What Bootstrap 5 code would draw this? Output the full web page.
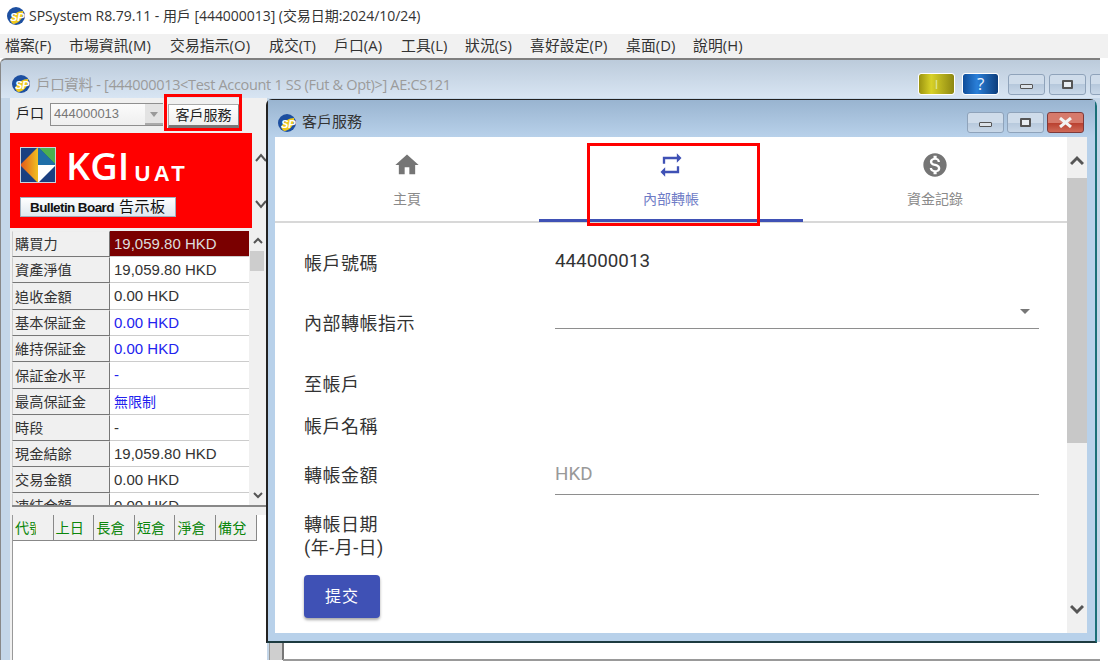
<!DOCTYPE html>
<html lang="zh-Hant">
<head>
<meta charset="utf-8">
<title>SPSystem</title>
<link href="https://cdn.jsdelivr.net/npm/bootstrap@5.3.0/dist/css/bootstrap.min.css" rel="stylesheet">
<style>
html,body{margin:0;height:672px;overflow:hidden;background:#fff}
body{font-family:"Liberation Sans","Noto Sans CJK TC",sans-serif;font-size:14px;color:#222;width:1108px;position:relative}
.top-title{height:34px;padding:0 0 3px 7px;gap:4px;font-size:14px;color:#333;font-family:"Open Sans","Noto Sans CJK TC",sans-serif;letter-spacing:-.04px}
.menu-strip{height:24px;background:#f1f1f1;color:#333;font-size:14.8px;letter-spacing:.1px;font-family:"Open Sans","Noto Sans CJK TC",sans-serif}
.menu-strip span{position:absolute;top:36px;line-height:18px}
.desk-window{position:absolute;left:0;top:58px;width:1100px;height:602px;background:#c4d6e8;border-top:2px solid #7f7f7f;border-left:1px solid #888;border-top-left-radius:6px;overflow:hidden}
.desk-head{height:38px;background:linear-gradient(#bccbdb,#d8e5f3);padding-left:11px;gap:6px;color:#9b9b9b;font-size:14.5px;padding-top:14px;align-items:flex-start!important;font-family:"Open Sans","Noto Sans CJK TC",sans-serif;letter-spacing:-.32px;position:relative}
.desk-head svg{margin-top:1px}
.side-panel{position:absolute;left:9px;top:38px;width:257px;height:562px;background:#f0f0f0}
.account-row{height:35px;padding:5px 0 0 6px;gap:6px;font-size:14px;line-height:21px}
.account-box{width:113px;height:23px;border:1px solid #8f8f8f;border-right:0;background:linear-gradient(#fbfbfb,#efefef);color:#777;padding-left:3px;line-height:20px;font-size:13px;position:relative}
.account-box i{position:absolute;right:0;top:0;bottom:0;width:18px;background:#e3e3e3;border-bottom:2px solid #aaa}
.account-box i::after{content:"";position:absolute;left:5px;top:8px;border:4px solid transparent;border-top:5px solid #999;border-bottom:0}
.account-action{margin:1px 0 0 -1px;width:72px;height:24px;background:linear-gradient(#fff,#eee);border:1px solid #aaa;border-bottom:3px solid #777;border-right:2px solid #888;font-size:14px;line-height:19px;text-align:center;color:#222;padding:0}
.banner-row{height:98px}
.kgi-banner{width:242px;height:95px;background:#f00;position:relative;color:#fff;padding:14px 0 0 10px}
.kgi-word{font-family:"Open Sans","Liberation Sans",sans-serif;font-weight:600;font-size:38px;line-height:36px;margin-left:10px}
.kgi-uat{font-family:"Liberation Sans",sans-serif;font-weight:700;font-size:22px;line-height:20px;letter-spacing:3.4px;margin:17px 0 0 5px}
.board-btn{width:156px;height:20px;margin-top:13px;padding-left:9px;background:linear-gradient(#fff,#dfe8ef);border:1px solid #9fb0bf;color:#111;font-size:13.5px;font-weight:700;line-height:18px;letter-spacing:-.6px;white-space:nowrap}
.board-btn em{font-style:normal;font-weight:400;font-size:15px;letter-spacing:.5px;margin-left:2px}
.side-chevrons{width:14px;height:95px;padding:19px 0 0 3px}
.info-wrap{height:276px;margin-left:2px;position:relative;overflow:hidden;border-bottom:2px solid #888}
.info-table{width:237px;border-collapse:separate;border-spacing:0;table-layout:fixed}
.info-table th{width:98px;height:26px;padding:0 0 0 2px;background:#f0f0f0;font-weight:400;font-size:14.2px;border-right:1px solid #777;border-bottom:1px solid #777;border-left:1px solid #ccc;border-top:1px solid #eee;color:#333;line-height:24px}
.info-table td{height:26px;padding:0 0 0 4px;background:#fff;font-size:15px;color:#333;border-bottom:1px solid #ccc;line-height:24px;white-space:nowrap}
.info-table tr.tall th,.info-table tr.tall td{height:27px}
.info-table td.hot{background:#7a0000;color:#ddd}
.info-table td.blu{color:#2222ee}
.info-table td.blu-sm{color:#2222ee;font-size:14px}
.side-scroll{width:15px;background:#f0f0f0;margin-left:1px;position:relative;height:274px}
.side-thumb{position:absolute;left:0;right:1px;top:20px;height:20px;background:#cdcdcd}
.chev-up,.chev-down{position:absolute;left:3px}
.chev-up{top:6px}.chev-down{bottom:6px}
.pos-area{height:calc(100% - 417px);margin:8px 0 0 2px;background:#fff;border-left:1px solid #999}
.pos-cells{height:26px}
.pos-cell{width:40.6px;background:#f0f0f0;color:#0b860b;font-size:14.2px;border-right:1px solid #888;border-bottom:1px solid #888;padding:3px 0 0 2px;line-height:20px;overflow:hidden;white-space:nowrap}
.pos-cell span{display:block;width:21px;overflow:hidden}
.win-btn-row{position:absolute;gap:4px}
.win-b{width:37px;height:21px;background:linear-gradient(#cfdcea 0 50%,#b6c8dc 50%,#c9d8e8);border:1px solid #8fa3ba;border-radius:3px;padding:0;display:flex;align-items:center;justify-content:center}
.win-b i{display:block}
.glyph-min{width:13px;height:5px;background:#dde3e9;border:1px solid #555;border-radius:1px;margin-top:4px}
.glyph-max{width:11px;height:9px;border:2px solid #555;background:#e9eef3;border-radius:1px}
.flag{position:absolute;top:14px;height:20px;width:35px;border-radius:2px;color:#dfe7a0;text-align:center;line-height:20px;font-size:13px;outline:1px solid #fff}
.flag-y{left:918px;background:linear-gradient(90deg,#9b9310,#d8d228 35%,#8d8711)}
.flag-b{left:962px;background:linear-gradient(90deg,#0e4d9a,#2a7fd8 40%,#0c3d7c);color:#eaf2ff;font-size:17px}
.back-col{position:absolute;left:269px;top:640px;width:14px;height:20px;background:#cfcfcf;border-left:1px solid #999;border-right:1px solid #777;z-index:0}
.back-line{position:absolute;left:283px;top:659px;width:817px;height:2px;background:#999}
.back-white{position:absolute;left:283px;top:642px;width:817px;height:17px;background:#fff;border-left:1px solid #777}
.svc-dialog{position:absolute;left:266px;top:99px;width:831px;height:544px;background:#b8d1ea;border:1px solid #222;border-left:2px solid #222;border-right:2px solid #1a6f78;border-bottom:2px solid #1d3b40;border-top-left-radius:6px;border-top-right-radius:7px;padding:0 8px 8px 7px;display:flex;flex-direction:column;z-index:2}
.svc-head{height:37px;margin:0 -8px 0 -7px;padding:8px 8px 0 10px;background:linear-gradient(#99b4d0,#b8d1ea);gap:6px;font-size:15px;color:#333;position:relative;flex:none}
.svc-head .win-btn-row{right:11px;top:12px;gap:3px}
.win-x{background:linear-gradient(#d67a6b 0 50%,#b83d2c 50%,#cf6a58);border-color:#7f3a3a}
.svc-body{flex:1;min-height:0;background:#fff;display:flex}
.svc-main{width:792px;display:flex;flex-direction:column;font-family:Roboto,"Noto Sans CJK TC",sans-serif}
.tab-row{height:86px;border-bottom:2px solid #d8d8d8;flex:none}
.tab-item{width:264px;height:85px;display:flex;flex-direction:column;align-items:center;color:#8a8a8a;font-size:14px;padding-top:14px;margin-bottom:-1px;text-decoration:none;letter-spacing:.05px}
.tab-item svg{margin-bottom:10px}
.tab-on{color:#6f7cc6;border-bottom:3px solid #3f51b5}
.form-area{padding:0 28px 0 29px;color:#333;font-size:18px;flex:1;position:relative}
.field{display:flex;align-items:center}
.field-lbl{width:251px;line-height:23px;letter-spacing:.5px}
.field-val{flex:1;font-size:18.8px;color:#333;margin-top:-4px}
.field-line{flex:1;height:40px;border-bottom:1px solid #8e8e8e;position:relative;color:#999;line-height:38px;font-size:18.8px}
.field-line b{position:absolute;right:9px;top:10px;border:5px solid transparent;border-top:5px solid #777;border-bottom:0}
.f1{margin-top:28px}
.f2{margin-top:27px;height:42px}
.f2 .field-line{height:30px;margin-bottom:18px}
.f3{margin-top:29px}
.f4{margin-top:19px}
.f5{margin-top:17px;height:40px}
.f6{margin-top:18px;line-height:23px}
.send-btn{display:block;margin:16px 0 0;width:76px;height:43px;background:#3f51b5;border:0;border-radius:4px;color:#fff;font-size:16px;box-shadow:0 2px 3px rgba(0,0,0,.35);font-family:inherit;padding:0;letter-spacing:1px}
.svc-scroll{width:20px;background:#f0f0f0;position:relative}
.svc-thumb{position:absolute;left:0;right:0;top:41px;height:265px;background:#c8c8c8}
.svc-scroll svg{position:absolute;left:3px}
.red-frame{position:absolute;border:3px solid #f00;z-index:5;pointer-events:none}
.rf1{left:164px;top:94px;width:78px;height:37px}
.rf2{left:587px;top:143px;width:173px;height:83px}
</style>
</head>
<body>
<div class="top-title d-flex align-items-center">
  <svg width="18" height="18" viewBox="0 0 18 18"><circle cx="9" cy="9" r="9" fill="#1d4fa0"/><path d="M3 13C6 7 11 4 16 4 17 9 13 16 7 17 5 17 4 15 3 13Z" fill="#f0c91d"/><text x="3" y="13.5" font-family="Liberation Sans" font-size="11" font-weight="700" font-style="italic" fill="#fff">SP</text></svg>
  <span>SPSystem R8.79.11 - 用戶 [444000013] (交易日期:2024/10/24)</span>
</div>
<div class="menu-strip">
  <span style="left:5px">檔案(F)</span><span style="left:69px">市場資訊(M)</span><span style="left:170px">交易指示(O)</span><span style="left:269px">成交(T)</span><span style="left:334px">戶口(A)</span><span style="left:401px">工具(L)</span><span style="left:465px">狀況(S)</span><span style="left:530px">喜好設定(P)</span><span style="left:626px">桌面(D)</span><span style="left:693px">說明(H)</span>
</div>

<div class="desk-window">
  <div class="desk-head d-flex">
    <svg width="18" height="18" viewBox="0 0 18 18"><circle cx="9" cy="9" r="9" fill="#1d4fa0"/><path d="M3 13C6 7 11 4 16 4 17 9 13 16 7 17 5 17 4 15 3 13Z" fill="#f0c91d"/><text x="3" y="13.5" font-family="Liberation Sans" font-size="11" font-weight="700" font-style="italic" fill="#fff">SP</text></svg>
    <span>戶口資料 - [444000013&lt;Test Account 1 SS (Fut &amp; Opt)&gt;] AE:CS121</span>
    <div class="flag flag-y">I</div>
    <div class="flag flag-b">?</div>
    <div class="win-btn-row d-flex" style="left:1007px;top:14px">
      <button class="win-b"><i class="glyph-min"></i></button>
      <button class="win-b"><i class="glyph-max"></i></button>
      <button class="win-b"></button>
    </div>
  </div>
  <div class="side-panel">
    <div class="account-row d-flex align-items-start">
      <span>戶口</span>
      <div class="account-box">444000013<i></i></div>
      <button class="account-action">客戶服務</button>
    </div>
    <div class="banner-row d-flex">
      <div class="kgi-banner">
        <div class="d-flex">
          <svg width="36" height="36" viewBox="0 0 36 36"><defs><linearGradient id="kg" x1="0" y1="0" x2="1" y2="0"><stop offset="0" stop-color="#e2541a"/><stop offset="1" stop-color="#f0c020"/></linearGradient></defs><rect width="36" height="36" fill="#1b3f80"/><polygon points="18,0 36,0 36,18" fill="#4caf50"/><polygon points="0,18 18,0 18,36" fill="url(#kg)"/><polygon points="18,18 36,18 18,36" fill="#fff"/><polygon points="18,0 36,18 18,18" fill="#1f6fa8"/><rect x=".5" y=".5" width="35" height="35" fill="none" stroke="#c9d3de"/></svg>
          <div class="kgi-word">KGI</div>
          <div class="kgi-uat">UAT</div>
        </div>
        <div class="board-btn">Bulletin Board <em>告示板</em></div>
      </div>
      <div class="side-chevrons">
        <svg width="12" height="60" viewBox="0 0 12 60"><path d="M1 9 6 3l5 6M1 49l5 6 5-6" fill="none" stroke="#555" stroke-width="2"/></svg>
      </div>
    </div>
    <div class="info-wrap d-flex">
      <table class="info-table">
        <tbody>
        <tr><th>購買力</th><td class="hot">19,059.80 HKD</td></tr>
        <tr><th>資產淨值</th><td>19,059.80 HKD</td></tr>
        <tr class="tall"><th>追收金額</th><td>0.00 HKD</td></tr>
        <tr><th>基本保証金</th><td class="blu">0.00 HKD</td></tr>
        <tr><th>維持保証金</th><td class="blu">0.00 HKD</td></tr>
        <tr class="tall"><th>保証金水平</th><td class="blu">-</td></tr>
        <tr><th>最高保証金</th><td class="blu-sm">無限制</td></tr>
        <tr><th>時段</th><td>-</td></tr>
        <tr><th>現金結餘</th><td>19,059.80 HKD</td></tr>
        <tr><th>交易金額</th><td>0.00 HKD</td></tr>
        <tr><th>凍結金額</th><td>0.00 HKD</td></tr>
        </tbody>
      </table>
      <div class="side-scroll">
        <svg class="chev-up" width="10" height="8" viewBox="0 0 10 8"><path d="M1 6 5 2l4 4" fill="none" stroke="#555" stroke-width="2"/></svg>
        <div class="side-thumb"></div>
        <svg class="chev-down" width="10" height="8" viewBox="0 0 10 8"><path d="M1 2l4 4 4-4" fill="none" stroke="#555" stroke-width="2"/></svg>
      </div>
    </div>
    <div class="pos-area">
      <div class="pos-cells d-flex">
        <div class="pos-cell"><span>代號</span></div><div class="pos-cell">上日</div><div class="pos-cell">長倉</div><div class="pos-cell">短倉</div><div class="pos-cell">淨倉</div><div class="pos-cell">備兌</div>
      </div>
    </div>
  </div>
</div>

<div class="back-white"></div>
<div class="back-col"></div>
<div class="back-line"></div>

<div class="svc-dialog">
  <div class="svc-head d-flex align-items-center">
    <svg width="18" height="18" viewBox="0 0 18 18"><circle cx="9" cy="9" r="9" fill="#1d4fa0"/><path d="M3 13C6 7 11 4 16 4 17 9 13 16 7 17 5 17 4 15 3 13Z" fill="#f0c91d"/><text x="3" y="13.5" font-family="Liberation Sans" font-size="11" font-weight="700" font-style="italic" fill="#fff">SP</text></svg>
    <span>客戶服務</span>
    <div class="win-btn-row d-flex">
      <button class="win-b"><i class="glyph-min"></i></button>
      <button class="win-b"><i class="glyph-max"></i></button>
      <button class="win-b win-x"><svg width="15" height="11" viewBox="0 0 15 11"><path d="M2 1l11 9M13 1 2 10" stroke="#f2f2f2" stroke-width="3"/></svg></button>
    </div>
  </div>
  <div class="svc-body">
    <div class="svc-main">
      <div class="tab-row d-flex">
        <a class="tab-item" href="#"><svg width="28" height="28" viewBox="0 0 24 24" fill="#757575"><path d="M10 20v-6h4v6h5v-8h3L12 3 2 12h3v8z"/></svg>主頁</a>
        <a class="tab-item tab-on" href="#"><svg width="28" height="28" viewBox="0 0 24 24" fill="#3f51b5"><path d="M7 7h10v3l4-4-4-4v3H5v6h2V7zm10 10H7v-3l-4 4 4 4v-3h12v-6h-2v4z"/></svg>內部轉帳</a>
        <a class="tab-item" href="#"><svg width="28" height="28" viewBox="0 0 24 24" fill="#757575"><path d="M12 2C6.48 2 2 6.48 2 12s4.48 10 10 10 10-4.48 10-10S17.52 2 12 2zm1.41 16.09V20h-2.67v-1.93c-1.71-.36-3.16-1.46-3.27-3.4h1.96c.1 1.05.82 1.87 2.65 1.87 1.96 0 2.4-.98 2.4-1.59 0-.83-.44-1.61-2.67-2.14-2.48-.6-4.18-1.62-4.18-3.67 0-1.72 1.39-2.84 3.11-3.21V4h2.67v1.95c1.86.45 2.79 1.86 2.85 3.39H14.3c-.05-1.11-.64-1.87-2.22-1.87-1.5 0-2.4.68-2.4 1.64 0 .84.65 1.39 2.67 1.91s4.18 1.39 4.18 3.91c-.01 1.83-1.38 2.83-3.12 3.16z"/></svg>資金記錄</a>
      </div>
      <div class="form-area">
        <div class="field f1"><div class="field-lbl">帳戶號碼</div><div class="field-val">444000013</div></div>
        <div class="field f2"><div class="field-lbl">內部轉帳指示</div><div class="field-line"><b></b></div></div>
        <div class="field f3"><div class="field-lbl">至帳戶</div></div>
        <div class="field f4"><div class="field-lbl">帳戶名稱</div></div>
        <div class="field f5"><div class="field-lbl">轉帳金額</div><div class="field-line">HKD</div></div>
        <div class="field-lbl f6">轉帳日期<br>(年-月-日)</div>
        <button class="send-btn">提交</button>
      </div>
    </div>
    <div class="svc-scroll">
      <svg style="top:18px" width="14" height="11" viewBox="0 0 14 11"><path d="M1 9l6-6 6 6" fill="none" stroke="#555" stroke-width="3"/></svg>
      <div class="svc-thumb"></div>
      <svg style="bottom:18px" width="14" height="11" viewBox="0 0 14 11"><path d="M1 2l6 6 6-6" fill="none" stroke="#555" stroke-width="3"/></svg>
    </div>
  </div>
</div>

<div class="red-frame rf1"></div>
<div class="red-frame rf2"></div>
</body>
</html>
